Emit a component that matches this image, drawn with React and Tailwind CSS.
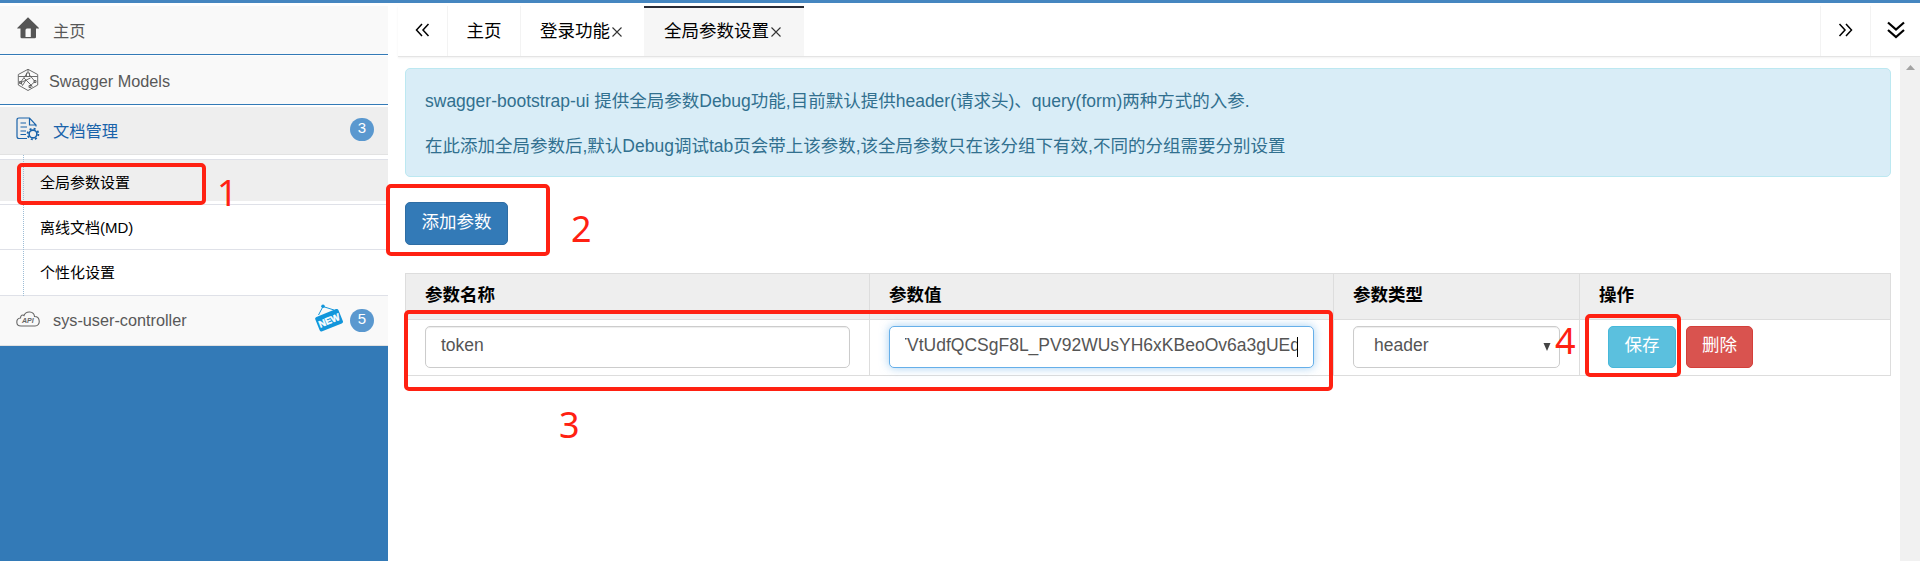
import { Children } from "react";

function NavIcon({ children, className = "" }) {
  return <span className={`flex w-6 shrink-0 items-center justify-center ${className}`}>{children}</span>;
}

function HomeIcon() {
  return (
    <svg width="22" height="22" viewBox="0 0 22 22" fill="#555">
      <path d="M11 0.3 L22 11 V11.5 H19 V20 Q19 21.3 17.700 21.3 H4.800 Q3.500 21.3 3.500 20 V11.5 H0.2 V11 Z" />
      <path d="M9.700 11.500 H13.800 V20 H8.500 V12.700 Z" fill="#f9f9f9" />
    </svg>
  );
}

function ModelsIcon() {
  return (
    <svg width="22" height="24" viewBox="0 0 22 24" fill="none" stroke="#5c5c5c" strokeWidth="0.9">
      <path d="M11 1.3 L20.700 6.500 V17 L11 22.5 L1.300 17 V6.500 Z" />
      <path d="M1.500 8.500 H20.5 M11 1.5 V5 M9.500 5 H12.500 V8.500 M9.500 5 V8.500 M9.500 6 L3.500 14.500 M12.500 7 L18 13.500 M7 10 L15.500 18.500 M4 14.500 L13.500 10 M5.500 17.500 L9 12 M18 13.500 L12.500 18.500 M4 14.500 L5.500 17.500" />
      <path d="M2.500 13.500 H4.500 V15.500 H2.500 Z M17 12.500 H19 V14.500 H17 Z M12 17.500 H14 V19.500 H12 Z" />
    </svg>
  );
}

function DocIcon() {
  return (
    <svg width="24" height="24" viewBox="0 0 24 24" fill="none" stroke="#1963aa" strokeWidth="1.2">
      <path d="M11 21.5 H3 Q1 21.5 1 19.5 V3 Q1 1 3 1 H13.5 L20 8 V9.500 M13.5 1 V8 H20" />
      <path d="M4.5 6 H10 M4.5 10 H11 M4.5 14 H10 M4.5 17.500 H10" />
      <circle cx="17" cy="17" r="3.900" strokeWidth="1.6" />
      <circle cx="17" cy="17" r="5.400" strokeWidth="1.8" strokeDasharray="2 2.241" />
    </svg>
  );
}

function ApiIcon() {
  return (
    <svg width="24" height="16" viewBox="0 0 24 16" fill="none" stroke="#666" strokeWidth="1.1">
      <path d="M5 15 C-0.500 15 -0.500 7.500 4.500 7 C4.500 4 7 3.500 8 4.500 C10 -0.500 18 0 18.500 5.500 C24.500 5.500 25 15 19 15 Z" />
      <text x="6" y="11.500" fontSize="7" fontStyle="italic" fontWeight="bold" fill="#666" stroke="none" fontFamily="Liberation Sans, sans-serif">API</text>
    </svg>
  );
}

function NewTag() {
  return (
    <svg width="30" height="28" viewBox="0 0 30 28">
      <path d="M4.500 11 L9 2.500 L20 6" fill="none" stroke="#1296db" strokeWidth="1" />
      <circle cx="9" cy="2.200" r="1.800" fill="#1296db" />
      <g transform="rotate(-22 15 16)">
        <rect x="2.500" y="8.500" width="25" height="15.500" rx="2" fill="#1296db" />
        <text x="15" y="19.800" textAnchor="middle" fontSize="9.500" fontWeight="bold" fill="#fff" stroke="#fff" strokeWidth="0.400" fontFamily="Liberation Sans, sans-serif">NEW</text>
      </g>
    </svg>
  );
}

function Badge({ children, className = "" }) {
  return (
    <span className={`flex h-[23px] w-6 items-center justify-center rounded-full bg-[#5a98cf] pb-[3px] text-[15px] text-white ${className}`}>
      {children}
    </span>
  );
}

function Sidebar() {
  return (
    <aside className="flex w-[388px] shrink-0 flex-col bg-[#337ab7] text-[16.250px] text-[#585858]">
      <div className="flex h-[49px] items-center gap-[13px] border-b border-[#337ab7] bg-[#f9f9f9] pl-4">
        <NavIcon className="pb-1"><HomeIcon /></NavIcon>
        <span className="pt-0.5">主页</span>
      </div>
      <div className="flex h-[50px] items-center gap-[9px] border-y border-t-white border-b-[#337ab7] bg-[#f9f9f9] pl-4">
        <NavIcon><ModelsIcon /></NavIcon>
        <span className="pt-0.5">Swagger Models</span>
      </div>
      <div className="flex h-[50px] items-center gap-[13px] border-t-2 border-b border-t-white border-b-[#e2e2e2] bg-[#eee] pl-4 pr-[14px] text-[#1963aa]">
        <NavIcon className="pb-1"><DocIcon /></NavIcon>
        <span className="flex-1 pt-0.5">文档管理</span>
        <Badge className="mb-0.5">3</Badge>
      </div>
      <div className="bg-white">
        <ul className="relative flex flex-col pt-1 text-[15px] text-black">
          <li className="flex h-[45px] flex-col border-t border-[#dfe1e8]">
            <span className="flex h-[41px] items-center bg-[#eee] pl-10 pt-1.5">全局参数设置</span>
          </li>
          <li className="flex h-[45px] items-center border-t border-[#dfe1e8] pl-10 pt-0.5">离线文档(MD)</li>
          <li className="flex h-[47px] items-center border-y border-[#dfe1e8] pl-10 pt-0.5">个性化设置</li>
          <span className="absolute bottom-0 left-[23px] top-0 border-l border-dotted border-[#9dbdd6]" />
        </ul>
      </div>
      <div className="flex h-[50px] items-center border-b border-[#e2e2e2] bg-[#f9f9f9] pl-4 pr-[14px]">
        <NavIcon className="pb-1"><ApiIcon /></NavIcon>
        <span className="flex-1 pl-[13px]">sys-user-controller</span>
        <span className="pb-1.5 pr-[6px]"><NewTag /></span>
        <Badge>5</Badge>
      </div>
    </aside>
  );
}

function TabBar() {
  return (
    <nav className="ml-[10px] flex h-[51px] shrink-0 border-b border-[#e4e4e4] bg-white text-[17.500px] text-black shadow-[0_1px_2px_rgba(0,0,0,0.06)]">
      <div className="flex w-[50px] items-center justify-center border-r border-[#f3f3f3] pb-0.5">
        <svg width="15" height="14" viewBox="0 0 15 14" fill="none" stroke="#000" strokeWidth="1.500">
          <path d="M7 1 L1.500 7 L7 13 M13.500 1 L8 7 L13.500 13" />
        </svg>
      </div>
      <div className="flex w-[73px] items-center justify-center border-r border-[#f3f3f3]">主页</div>
      <div className="flex w-[123px] items-center gap-0.5 pl-[19px]">登录功能<Close /></div>
      <div className="flex w-[160px] items-center gap-0.5 border-t-2 border-[#292b34] bg-[#f6f6f6] pb-0.5 pl-5">全局参数设置<Close /></div>
      <div className="flex-1" />
      <div className="flex w-[51px] items-center justify-center border-x border-[#f3f3f3] pb-0.5">
        <svg width="15" height="14" viewBox="0 0 15 14" fill="none" stroke="#000" strokeWidth="1.500">
          <path d="M1.500 1 L7 7 L1.500 13 M8 1 L13.500 7 L8 13" />
        </svg>
      </div>
      <div className="flex w-[49px] items-center justify-center pb-0.5">
        <svg width="18" height="18" viewBox="0 0 18 18" fill="none" stroke="#000" strokeWidth="2.200">
          <path d="M1 1.500 L9 8.500 L17 1.500 M1 9 L9 16 L17 9" />
        </svg>
      </div>
    </nav>
  );
}

function Close() {
  return (
    <svg width="10" height="10" viewBox="0 0 10 10" fill="none" stroke="#333" strokeWidth="1.100" className="mt-0.5">
      <path d="M0.500 0.500 L9.500 9.500 M9.500 0.500 L0.500 9.500" />
    </svg>
  );
}

function Row({ header, children }) {
  return (
    <div className={header ? "grid h-[45px] grid-cols-[464px_464px_246px_310px] bg-[#eee] font-bold text-black" : "grid h-[56px] grid-cols-[464px_464px_246px_310px] border-t border-[#ddd]"}>
      {Children.map(children, (cell) => (
        <div className="flex items-start border-r border-[#ddd] pl-[19px] last:border-r-0">{cell}</div>
      ))}
    </div>
  );
}

const field = "mt-1.5 flex h-[42px] items-center rounded-[5px] border bg-white text-[#555]";

function ParamTable() {
  return (
    <section className="mt-[28px] w-[1486px] border border-[#ddd] text-[17.500px]">
      <Row header>
        <span className="pt-2">参数名称</span>
        <span className="pt-2">参数值</span>
        <span className="pt-2">参数类型</span>
        <span className="pt-2">操作</span>
      </Row>
      <Row>
        <div className={`${field} w-[425px] border-[#ccc] pb-[3px] pl-[15px] shadow-[inset_0_1px_1px_rgba(0,0,0,0.075)]`}>token</div>
        <div className={`${field} w-[425px] border-[#66afe9] px-[15px] shadow-[0_0_10px_rgba(102,175,233,0.6)]`}>
          <div className="flex h-[20px] flex-1 items-center justify-end overflow-hidden whitespace-nowrap border-r border-black pb-[3px]">
            <span className="-mr-[3px]">TVtUdfQCSgF8L_PV92WUsYH6xKBeoOv6a3gUEd</span>
          </div>
        </div>
        <div className={`${field} w-[207px] justify-between border-[#ccc] pl-5 pr-2 shadow-[inset_0_1px_1px_rgba(0,0,0,0.075)]`}>
          <span className="pb-[3px]">header</span>
          <svg width="8" height="8" viewBox="0 0 8 8" fill="#444"><path d="M0.500 0 H7.500 L4 8 Z" /></svg>
        </div>
        <div className="flex gap-[10px] pl-[9px] pt-1.5 text-white">
          <button className="h-[42px] w-[68px] rounded-[5px] border border-[#46b8da] bg-[#5bc0de] pb-[3px]">保存</button>
          <button className="h-[42px] w-[67px] rounded-[5px] border border-[#d43f3a] bg-[#d9534f] pb-[3px]">删除</button>
        </div>
      </Row>
    </section>
  );
}

function Marks() {
  const box = "absolute rounded-[5px] border-4 border-[#ff2112]";
  const digit = "absolute font-['Noto_Sans'] text-[36px] leading-none text-[#ff2112]";
  return (
    <div className="pointer-events-none absolute inset-0">
      <div className={`${box} left-[17px] top-[163px] h-[42px] w-[189px]`} />
      <div className={`${box} left-[386px] top-[184px] h-[72px] w-[164px]`} />
      <div className={`${box} left-[404px] top-[310px] h-[81px] w-[929px]`} />
      <div className={`${box} left-[1585px] top-[314px] h-[63px] w-[96px]`} />
      <span className={`${digit} left-[217px] top-[175px]`}>1</span>
      <span className={`${digit} left-[571px] top-[211px]`}>2</span>
      <span className={`${digit} left-[559px] top-[407px]`}>3</span>
      <span className={`${digit} left-[1555px] top-[323px]`}>4</span>
    </div>
  );
}

export default function App() {
  return (
    <div className="relative flex h-[561px] w-[1920px] flex-col overflow-hidden bg-white font-['Liberation_Sans','Noto_Sans_CJK_SC',sans-serif]">
      <header className="h-[3px] shrink-0 bg-[#4586c0]" />
      <div className="flex min-h-0 flex-1 pt-[3px]">
        <Sidebar />
        <main className="flex min-w-0 flex-1 flex-col">
          <TabBar />
          <div className="flex min-h-0 flex-1">
            <div className="flex flex-1 flex-col items-start pl-[17px] pt-[11px]">
              <div className="flex h-[109px] w-[1486px] flex-col gap-5 rounded-[5px] border border-[#bce8f1] bg-[#d9edf7] pl-[19px] pt-5 text-[17.500px] leading-[25px] text-[#31708f]">
                <p>swagger-bootstrap-ui 提供全局参数Debug功能,目前默认提供header(请求头)、query(form)两种方式的入参.</p>
                <p>在此添加全局参数后,默认Debug调试tab页会带上该参数,该全局参数只在该分组下有效,不同的分组需要分别设置</p>
              </div>
              <button className="mt-[25px] h-[43px] w-[103px] rounded-[5px] border border-[#2e6da4] bg-[#337ab7] pb-[3px] text-[17.500px] text-white">添加参数</button>
              <ParamTable />
            </div>
            <div className="flex w-5 justify-center bg-[#f1f1f1] pt-2">
              <svg width="9" height="5" viewBox="0 0 9 5" fill="#a3a3a3"><path d="M0 5 L4.500 0 L9 5 Z" /></svg>
            </div>
          </div>
        </main>
      </div>
      <Marks />
    </div>
  );
}
